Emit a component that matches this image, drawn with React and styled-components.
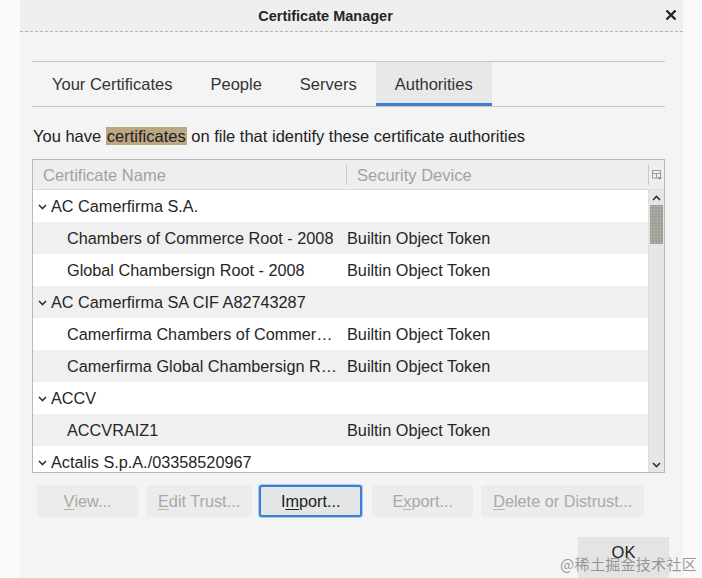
import React from 'react';
import styled, { createGlobalStyle } from 'styled-components';

const GlobalStyle = createGlobalStyle`
  html, body {
    margin: 0;
    padding: 0;
    background: #fafafa;
    font-family: "Liberation Sans", Arial, sans-serif;
    color: #2b2b2b;
  }
`;

const rows = [
  { kind: 'group', name: 'AC Camerfirma S.A.' },
  { kind: 'item', name: 'Chambers of Commerce Root - 2008', device: 'Builtin Object Token' },
  { kind: 'item', name: 'Global Chambersign Root - 2008', device: 'Builtin Object Token' },
  { kind: 'group', name: 'AC Camerfirma SA CIF A82743287' },
  { kind: 'item', name: 'Camerfirma Chambers of Commerce Root', device: 'Builtin Object Token' },
  { kind: 'item', name: 'Camerfirma Global Chambersign Root', device: 'Builtin Object Token' },
  { kind: 'group', name: 'ACCV' },
  { kind: 'item', name: 'ACCVRAIZ1', device: 'Builtin Object Token' },
  { kind: 'group', name: 'Actalis S.p.A./03358520967' },
  { kind: 'item', name: 'Actalis Authentication Root CA', device: 'Builtin Object Token' },
];

const tabs = ['Your Certificates', 'People', 'Servers', 'Authorities'];

const buttons = [
  { pre: '', key: 'V', post: 'iew...', enabled: false },
  { pre: '', key: 'E', post: 'dit Trust...', enabled: false },
  { pre: 'I', key: 'm', post: 'port...', enabled: true },
  { pre: 'E', key: 'x', post: 'port...', enabled: false },
  { pre: '', key: 'D', post: 'elete or Distrust...', enabled: false },
];

const Chevron = ({ up }) => (
  <svg width="9" height="6" viewBox="0 0 9 6">
    <path
      d={up ? 'M1 5 L4.5 1.5 L8 5' : 'M1 1 L4.5 4.5 L8 1'}
      fill="none"
      stroke="#333"
      strokeWidth="1.6"
    />
  </svg>
);

const App = () => {
  return (
    <>
      <GlobalStyle />
      <Dialog>
        <TitleBar>
          <span />
          <Title>Certificate Manager</Title>
          <Close>
            <svg width="12" height="12" viewBox="0 0 12 12">
              <path d="M1.5 1.5 L10.5 10.5 M10.5 1.5 L1.5 10.5" stroke="#2a2228" strokeWidth="2.4" />
            </svg>
          </Close>
        </TitleBar>
        <Body>
          <TabStrip>
            {tabs.map((t) => (
              <Tab key={t} $active={t === 'Authorities'}>{t}</Tab>
            ))}
          </TabStrip>
          <Description>
            You have <Mark>certificates</Mark> on file that identify these certificate authorities
          </Description>
          <Tree>
            <Header>
              <HeadCell>Certificate Name</HeadCell>
              <HeadCell $divider>Security Device</HeadCell>
              <PickerCell>
                <svg width="10" height="10" viewBox="0 0 10 10">
                  <rect x="0.5" y="0.5" width="8" height="7.5" fill="none" stroke="#9a9a9a" />
                  <path d="M0.5 3.5 H8.5 M4.5 3.5 V8" stroke="#9a9a9a" />
                  <path d="M6 7.5 L9.5 7.5 L7.75 9.5 Z" fill="#666" />
                </svg>
              </PickerCell>
            </Header>
            <TreeBody>
              <RowList>
                {rows.map((r, i) => (
                  <Row key={r.name} $odd={i % 2 === 1}>
                    <NameCell $group={r.kind === 'group'}>
                      {r.kind === 'group' && (
                        <Twisty><Chevron /></Twisty>
                      )}
                      <Ellipsis>{r.name}</Ellipsis>
                    </NameCell>
                    <DeviceCell>{r.device}</DeviceCell>
                  </Row>
                ))}
              </RowList>
              <Scrollbar>
                <ScrollArrow><Chevron up /></ScrollArrow>
                <Track>
                  <Thumb />
                </Track>
                <ScrollArrow><Chevron /></ScrollArrow>
              </Scrollbar>
            </TreeBody>
          </Tree>
          <ButtonRow>
            {buttons.map((b) => (
              <Button key={b.post} $enabled={b.enabled}>
                {b.pre}<AccessKey $enabled={b.enabled}>{b.key}</AccessKey>{b.post}
              </Button>
            ))}
          </ButtonRow>
        </Body>
        <Footer>
          <OkButton>OK</OkButton>
        </Footer>
      </Dialog>
      <Watermark>@稀土掘金技术社区</Watermark>
    </>
  );
};

const Dialog = styled.div`
  margin: 0 19px 0 20px;
  height: 578px;
  background: #f4f4f4;
  overflow: hidden;
`;

const TitleBar = styled.div`
  height: 31px;
  background: #efefef;
  border-bottom: 1px dashed #b4b4b4;
  display: grid;
  grid-template-columns: 1fr auto 1fr;
  align-items: center;
`;

const Title = styled.div`
  font-weight: bold;
  font-size: 14.5px;
  color: #2a2228;
  padding-right: 52px;
`;

const Close = styled.div`
  justify-self: end;
  padding-right: 6px;
  display: flex;
  margin-top: -2px;
`;

const Body = styled.div`
  padding: 29px 18px 0 12px;
`;

const TabStrip = styled.div`
  display: flex;
  height: 44px;
  border-top: 1px solid #cdc9ad;
  border-bottom: 1px solid #cdc9ad;
  padding-left: 1px;
`;

const Tab = styled.div`
  display: flex;
  align-items: center;
  padding: 1px 19px 0 19px;
  font-size: 16.5px;
  color: #333;
  background: ${(p) => (p.$active ? '#e8e8e8' : 'transparent')};
  box-shadow: ${(p) => (p.$active ? 'inset 0 -3px 0 #3a7fd3' : 'none')};
`;

const Description = styled.div`
  margin-top: 19px;
  font-size: 16.5px;
  line-height: 20px;
  padding-left: 1px;
  color: #222;
`;

const Mark = styled.span`
  background: #bca683;
  padding: 0 1px;
`;

const Tree = styled.div`
  margin-top: 13px;
  border: 1px solid #b9b9b9;
  background: #ffffff;
`;

const Header = styled.div`
  display: grid;
  grid-template-columns: 313px 1fr 16px;
  height: 29px;
  background: #eeeeee;
  border-bottom: 1px solid #dcdcdc;
  align-items: center;
`;

const HeadCell = styled.div`
  font-size: 16.5px;
  color: #a2a2a2;
  padding-left: 10px;
  border-left: ${(p) => (p.$divider ? '1px solid #cfcbb0' : 'none')};
  line-height: 20px;
`;

const PickerCell = styled.div`
  border-left: 1px solid #cfcbb0;
  height: 20px;
  display: flex;
  align-items: center;
  justify-content: center;
`;

const TreeBody = styled.div`
  display: grid;
  grid-template-columns: 1fr 16px;
  height: 282px;
  overflow: hidden;
`;

const RowList = styled.div`
  overflow: hidden;
`;

const Row = styled.div`
  display: grid;
  grid-template-columns: 313px 1fr;
  height: 32px;
  align-items: center;
  background: ${(p) => (p.$odd ? '#f0f0f0' : '#ffffff')};
  font-size: 16.25px;
  color: #262626;
`;

const NameCell = styled.div`
  display: flex;
  align-items: center;
  padding-left: ${(p) => (p.$group ? '5px' : '34px')};
  min-width: 0;
`;

const Twisty = styled.span`
  display: flex;
  width: 13px;
  margin-top: 2px;
`;

const Ellipsis = styled.span`
  white-space: nowrap;
  overflow: hidden;
  text-overflow: ellipsis;
  padding-right: 6px;
`;

const DeviceCell = styled.div`
  white-space: nowrap;
  padding-left: 1px;
`;

const Scrollbar = styled.div`
  display: flex;
  flex-direction: column;
  background: #e6e6e4;
  border-left: 1px solid #dedede;
`;

const ScrollArrow = styled.div`
  height: 15px;
  display: flex;
  align-items: center;
  justify-content: center;
  flex: none;
`;

const Track = styled.div`
  flex: 1;
  padding: 0 1px;
`;

const Thumb = styled.div`
  height: 39px;
  background: #9ea09c;
  background-image: radial-gradient(#c9c6b5 0.6px, transparent 0.8px);
  background-size: 3px 3px;
`;

const ButtonRow = styled.div`
  display: flex;
  gap: 8px;
  margin-top: 12px;
  padding-left: 5px;
`;

const Button = styled.div`
  box-sizing: border-box;
  min-width: ${(p) => (p.$enabled ? '103px' : '101px')};
  height: 32px;
  padding: 0 11px;
  display: flex;
  align-items: center;
  justify-content: center;
  font-size: 16.25px;
  white-space: nowrap;
  border-radius: 3px;
  background: ${(p) => (p.$enabled ? '#e4e5e7' : '#ececec')};
  color: ${(p) => (p.$enabled ? '#1e1e1e' : '#a9a9a9')};
  border: ${(p) => (p.$enabled ? '2px solid #3d80d2' : '1px solid transparent')};
  box-shadow: ${(p) => (p.$enabled ? '0 0 0 1px #a9c8ee' : 'none')};
  margin: ${(p) => (p.$enabled ? '0 2px 0 -1px' : '0')};
`;

const AccessKey = styled.span`
  text-decoration: underline;
  text-decoration-color: ${(p) => (p.$enabled ? '#1e1e1e' : '#c4b48e')};
  text-underline-offset: 2px;
`;

const Footer = styled.div`
  display: flex;
  justify-content: flex-end;
  padding: 20px 14px 0 0;
`;

const OkButton = styled.div`
  width: 91px;
  height: 42px;
  background: #e4e4e4;
  font-size: 16.5px;
  color: #222;
  text-align: center;
  padding-top: 6px;
  box-sizing: border-box;
`;

const Watermark = styled.div`
  position: absolute;
  right: 5px;
  bottom: 4px;
  font-family: "Noto Sans CJK SC", "Liberation Serif", serif;
  font-size: 15px;
  color: rgba(120, 120, 120, 0.75);
  letter-spacing: 0.3px;
`;

export default App;
